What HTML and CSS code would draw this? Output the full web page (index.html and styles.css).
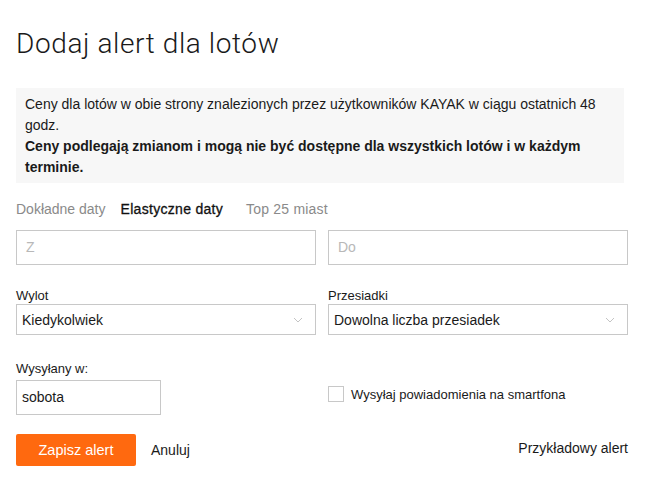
FILE: index.html
```html
<!DOCTYPE html>
<html lang="pl">
<head>
<meta charset="utf-8">
<title>Dodaj alert dla lotów</title>
<link rel="stylesheet" href="styles.css">
</head>
<body>
<div class="page">
  <h1 class="title">Dodaj alert dla lotów</h1>
  <div class="info">
    <p>Ceny dla lotów w obie strony znalezionych przez użytkowników KAYAK w ciągu ostatnich 48 godz.</p>
    <p class="strong">Ceny podlegają zmianom i mogą nie być dostępne dla wszystkich lotów i w każdym terminie.</p>
  </div>
  <div class="tabs">
    <span class="tab">Dokładne daty</span>
    <span class="tab active">Elastyczne daty</span>
    <span class="tab">Top 25 miast</span>
  </div>
  <div class="row places">
    <div class="field"><div class="input placeholder">Z</div></div>
    <div class="field"><div class="input placeholder">Do</div></div>
  </div>
  <div class="row selects">
    <div class="field">
      <div class="label">Wylot</div>
      <div class="select"><span>Kiedykolwiek</span>
        <svg class="chev" width="10" height="6" viewBox="0 0 10 6"><path d="M1 1l4 4 4-4" fill="none" stroke="#c4c4c4" stroke-width="1"/></svg>
      </div>
    </div>
    <div class="field">
      <div class="label">Przesiadki</div>
      <div class="select"><span>Dowolna liczba przesiadek</span>
        <svg class="chev" width="10" height="6" viewBox="0 0 10 6"><path d="M1 1l4 4 4-4" fill="none" stroke="#c4c4c4" stroke-width="1"/></svg>
      </div>
    </div>
  </div>
  <div class="row sendrow">
    <div class="field">
      <div class="label">Wysyłany w:</div>
      <div class="day">sobota</div>
    </div>
    <div class="field check">
      <span class="box"></span>
      <span class="check-label">Wysyłaj powiadomienia na smartfona</span>
    </div>
  </div>
  <div class="actions">
    <button class="save">Zapisz alert</button>
    <span class="cancel">Anuluj</span>
    <span class="sample">Przykładowy alert</span>
  </div>
</div>
</body>
</html>
```

FILE: styles.css
```css
* { box-sizing: border-box; }
html, body { margin: 0; padding: 0; background: #fff; }
body {
  font-family: "Liberation Sans", Arial, Helvetica, sans-serif;
  color: #1a1a1a;
}
.page {
  width: 612px;
  margin-left: 16px;
  padding-top: 28px;
}
.title {
  margin: 0;
  font-family: Roboto, "Liberation Sans", Arial, sans-serif;
  font-size: 28px;
  line-height: 32px;
  font-weight: 300;
  letter-spacing: 0.6px;
  color: #1a1a1a;
}
.info {
  margin-top: 28px;
  width: 608px;
  background: #f7f7f7;
  padding: 6px 8px 5px 9px;
  font-size: 14px;
  line-height: 21px;
  color: #1a1a1a;
}
.info p { margin: 0; }
.info .strong { font-weight: bold; }
.tabs {
  display: flex;
  gap: 15px;
  margin-top: 18px;
  font-size: 14px;
  line-height: 16px;
}
.tab { color: #8a8a8a; }
.tab.active {
  color: #111;
  margin-right: 8px;
  letter-spacing: 0.3px;
  -webkit-text-stroke: 0.3px #111;
}
.tab:last-child { letter-spacing: 0.2px; }
.row {
  display: flex;
  gap: 12px;
}
.field { width: 300px; }
.places { margin-top: 13px; }
.input {
  height: 35px;
  border: 1px solid #c8c8c8;
  padding: 0 9px;
  font-size: 14px;
  line-height: 33px;
}
.placeholder { color: #b8b8b8; }
.selects { margin-top: 23px; }
.label {
  font-size: 13px;
  line-height: 16px;
  color: #1a1a1a;
  margin-bottom: 0;
}
.select {
  height: 31px;
  border: 1px solid #c8c8c8;
  display: flex;
  align-items: center;
  justify-content: space-between;
  padding: 0 12px 0 5px;
  font-size: 14px;
}
.chev { display: block; }
.sendrow { margin-top: 26px; align-items: flex-start; }
.sendrow .label { margin-bottom: 3px; }
.day {
  width: 145px;
  height: 35px;
  border: 1px solid #c8c8c8;
  padding: 0 5px;
  font-size: 14px;
  line-height: 33px;
}
.check {
  display: flex;
  align-items: center;
  gap: 7px;
  padding-top: 25px;
  font-size: 13px;
}
.box {
  width: 16px;
  height: 16px;
  border: 1px solid #c8c8c8;
  background: #fff;
}
.actions {
  display: flex;
  align-items: center;
  margin-top: 19px;
  font-size: 14px;
}
.save {
  width: 120px;
  height: 32px;
  border: none;
  border-radius: 2px;
  background: #ff690f;
  color: #fff;
  font-family: inherit;
  font-size: 14.5px;
  padding: 0;
}
.cancel { margin-left: 15px; color: #1a1a1a; }
.sample { margin-left: auto; color: #1a1a1a; margin-top: -4px; }
```
